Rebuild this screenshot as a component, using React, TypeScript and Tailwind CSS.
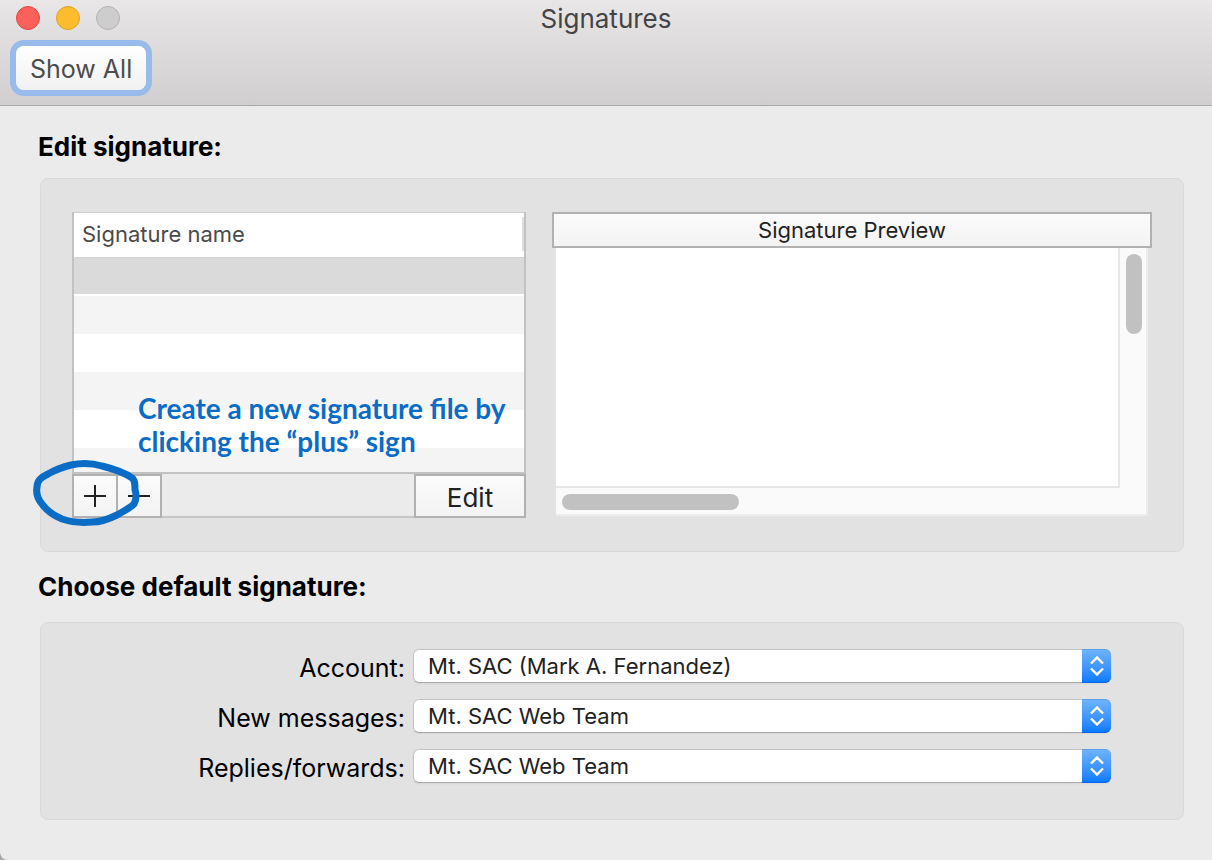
import React from "react";

const rows = [
  "h-[37px] bg-[#dadada] border-t border-[#d2d2d2]",
  "h-[2px] bg-white",
  "h-[38px] bg-[#f4f4f4]",
  "h-[38px] bg-white",
  "h-[38px] bg-[#f4f4f4]",
  "h-[38px] bg-white",
  "h-[24px] bg-[#f4f4f4]",
];

const defaults = [
  { id: "account", label: "Account:", value: "Mt. SAC (Mark A. Fernandez)" },
  { id: "new-messages", label: "New messages:", value: "Mt. SAC Web Team" },
  { id: "replies", label: "Replies/forwards:", value: "Mt. SAC Web Team" },
];

const TitleBar: React.FC = () => {
  return (
    <header className="relative h-[106px] border-b border-[#a9a7a8] bg-linear-to-b from-[#e9e6e8] to-[#d1cecf] px-4 pt-[6px]">
      <div className="flex gap-4">
        <button aria-label="Close" className="size-6 rounded-full border border-[#e2463f] bg-[#fc605b]" />
        <button aria-label="Minimize" className="size-6 rounded-full border border-[#dfa023] bg-[#fdbc2e]" />
        <button aria-label="Zoom" className="size-6 rounded-full border border-[#b4b2b3] bg-[#cecdce]" />
      </div>
      <h1 className="absolute inset-x-0 top-1 text-center text-[26px] leading-[30px] text-[#454445]">
        Signatures
      </h1>
      <button className="mt-4 h-11 rounded-lg bg-linear-to-b from-white to-[#f1f1f1] px-[14px] pt-[2px] text-[25px] leading-[42px] text-[#4c4c4c] ring-[6px] ring-[#97bbea]">
        Show All
      </button>
    </header>
  );
};

const SignatureList: React.FC = () => {
  return (
    <div className="relative">
      <div className="border-x-2 border-t border-b-2 border-[#c2c2c2] border-t-[#cfcfcf] bg-white">
        <table className="w-full border-collapse">
          <thead>
            <tr className="h-[44px]">
              <th className="pb-[2px] pl-2 text-left text-[22px] leading-[34px] font-normal text-[#4a4a4a]">
                <div className="border-r-2 border-[#dedede]">Signature name</div>
              </th>
            </tr>
          </thead>
          <tbody>
            {rows.map((row, i) => (
              <tr key={i} className={row}>
                <td className="p-0" />
              </tr>
            ))}
          </tbody>
        </table>
      </div>
      <div className="flex h-[44px] border-b-2 border-[#c6c6c6] bg-[#ebebeb]">
        <button
          aria-label="Add signature"
          className="flex h-[44px] w-[46px] items-center justify-center border-2 border-[#b1b1b1] bg-linear-to-b from-[#fbfbfb] to-[#f3f3f3]"
        >
          <svg width="22" height="22" viewBox="0 0 22 22" stroke="#222" strokeWidth="2">
            <path d="M0 11H22M11 0V22" />
          </svg>
        </button>
        <button
          aria-label="Remove signature"
          className="flex h-[44px] w-[44px] items-center justify-center border-2 border-l-0 border-[#b1b1b1] bg-linear-to-b from-[#fbfbfb] to-[#f3f3f3]"
        >
          <svg width="22" height="22" viewBox="0 0 22 22" stroke="#222" strokeWidth="2">
            <path d="M0 11H22" />
          </svg>
        </button>
        <button className="ml-auto h-[44px] w-[112px] border-2 border-[#b1b1b1] bg-linear-to-b from-[#fbfbfb] to-[#f3f3f3] pt-1 text-[26px] leading-9 text-[#222]">
          Edit
        </button>
      </div>

      {/* callout */}
      <p className="absolute top-[180px] left-[66px] font-['Lato',sans-serif] text-[28px] leading-[33px] font-bold whitespace-nowrap text-[#0a6cc4]">
        Create a new signature file by
        <br />
        clicking the “plus” sign
      </p>
      <svg
        className="pointer-events-none absolute top-[244px] -left-[42px]"
        width="112"
        height="74"
        viewBox="30 456 112 74"
        fill="none"
        stroke="#0a6cc4"
        strokeWidth="7"
        strokeLinejoin="round"
      >
        <path d="M71 465C80 463 92 463 102 466C114 469 124 472 132 478C135 480 135 485 135 490C137 495 136 500 134 504C130 508 124 511 117 515C109 519 101 522 92 522C82 523 71 522 62 519C52 515 47 511 42 504C37 498 36 492 37 487C37 480 42 477 48 474C55 470 63 467 71 465Z" />
      </svg>
    </div>
  );
};

const SignaturePreview: React.FC = () => {
  return (
    <div className="flex flex-col">
      <h3 className="h-9 border-2 border-[#b1b1b1] bg-linear-to-b from-[#fbfbfb] to-[#f3f3f3] text-center text-[22px] leading-8 text-[#222]">
        Signature Preview
      </h3>
      <div className="mx-1 grid h-[268px] grid-cols-[1fr_26px] grid-rows-[1fr_26px] border-r-2 border-b-2 border-[#ececec] bg-[#fafafa]">
        <div className="border-r-2 border-b-2 border-[#e7e7e7] bg-white" />
        <div className="px-[6px] pt-[6px]">
          <div className="h-20 w-4 rounded-full bg-[#c1c1c1]" />
        </div>
        <div className="px-[6px] pt-[6px]">
          <div className="h-4 w-[177px] rounded-full bg-[#c1c1c1]" />
        </div>
      </div>
    </div>
  );
};

const DefaultSelect: React.FC<{ id: string; value: string }> = ({ id, value }) => {
  return (
    <div className="relative h-[34px]">
      <select
        id={id}
        defaultValue={value}
        className="block h-[34px] w-full appearance-none rounded-md border border-[#c4c4c4] border-b-[#a8a8a8] bg-white pl-[14px] text-[22px] leading-8 text-[#222] shadow-xs"
      >
        <option>{value}</option>
      </select>
      <span className="pointer-events-none absolute inset-y-0 right-0 flex w-[29px] items-center justify-center rounded-r-md border-t border-b border-t-[#5b9fee] border-b-[#0a63f0] bg-linear-to-b from-[#6cb3fa] to-[#077bff]">
        <svg width="14" height="20" viewBox="0 0 14 20" fill="none" stroke="#fff" strokeWidth="2.4">
          <path d="M1 7.5L7 1.5L13 7.5M1 12.5L7 18.5L13 12.5" />
        </svg>
      </span>
    </div>
  );
};

const App: React.FC = () => {
  return (
    <div className="bg-[#a8a8a8] font-['Inter',sans-serif] text-black">
      <div className="min-h-screen rounded-bl-lg bg-[#ebebeb]">
        <TitleBar />
        <main className="px-7 pt-[25px] pl-10">
          <h2 className="-ml-[2px] text-[26px] leading-8 font-bold">Edit signature:</h2>
          <section className="mt-[15px] grid grid-cols-[454fr_600fr] gap-[26px] rounded-lg border border-[#d9d9d9] bg-[#e2e2e2] px-[31px] py-[33px]">
            <SignatureList />
            <SignaturePreview />
          </section>

          <h2 className="mt-[19px] -ml-[2px] text-[26px] leading-8 font-bold">Choose default signature:</h2>
          <section className="mt-[19px] grid grid-cols-[364px_1fr] gap-x-2 gap-y-3 rounded-lg border border-[#d9d9d9] bg-[#e2e2e2] pt-[26px] pr-[72px] pb-8">
            {defaults.map((item) => (
              <React.Fragment key={item.id}>
                <label htmlFor={item.id} className="text-right text-[25px] leading-[38px]">
                  {item.label}
                </label>
                <DefaultSelect id={item.id} value={item.value} />
              </React.Fragment>
            ))}
          </section>
        </main>
      </div>
    </div>
  );
};

export default App;
